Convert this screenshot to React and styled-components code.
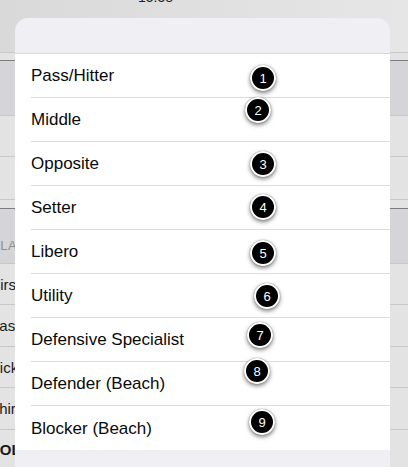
import React from "react";
import styled, { createGlobalStyle } from "styled-components";

const Global = createGlobalStyle`
  html, body { margin: 0; padding: 0; }
  body {
    width: 408px;
    height: 467px;
    overflow: hidden;
    font-family: "Liberation Sans", Arial, sans-serif;
    background: #e3e3e3;
  }
`;

const Page = styled.div`
  position: relative;
  width: 408px;
  height: 467px;
  overflow: hidden;
  background: #e3e3e3;
`;

const TopBar = styled.div`
  height: 52px;
  background: linear-gradient(90deg, #d9d9d9 0%, #e1e1e1 60%, #e6e6e6 100%);
  border-bottom: 1px solid #c9c9c9;
  overflow: hidden;
`;

const Clock = styled.div`
  margin-top: -10px;
  padding-left: 138px;
  font-size: 14px;
  line-height: 14px;
  color: #222;
`;

const BgRow = styled.div`
  height: ${(p) => p.$h}px;
  background: ${(p) => (p.$dark ? "#d5d5d9" : "#e3e3e3")};
  border-bottom: 1px solid ${(p) => (p.$line ? p.$line : "#c8c8c8")};
  box-sizing: border-box;
  display: flex;
  align-items: ${(p) => (p.$end ? "flex-end" : "center")};
  padding-bottom: ${(p) => (p.$end ? "10px" : "0")};
  overflow: hidden;
`;

const BgLabel = styled.span`
  margin-left: ${(p) => p.$shift}px;
  font-size: ${(p) => (p.$small ? 13 : 15)}px;
  color: ${(p) => (p.$small ? "#8e8e93" : "#1a1a1a")};
  font-weight: ${(p) => (p.$bold ? 700 : 400)};
  letter-spacing: ${(p) => (p.$small ? "0.5px" : "0")};
  white-space: nowrap;
`;

const Popover = styled.div`
  position: absolute;
  left: 15px;
  top: 18px;
  width: 375px;
  bottom: 0;
  background: #efeff4;
  border-radius: 13px 13px 0 0;
  display: flex;
  flex-direction: column;
`;

const Header = styled.div`
  height: 35px;
  flex: none;
  border-bottom: 1px solid #d8d8dc;
`;

const List = styled.div`
  background: #ffffff;
  display: flex;
  flex-direction: column;
`;

const Row = styled.div`
  position: relative;
  height: 44px;
  margin-left: 16px;
  box-sizing: border-box;
  border-bottom: ${(p) => (p.$last ? "none" : "1px solid #dcdcde")};
  display: flex;
  align-items: center;
  font-size: 17px;
  color: #0a0a0a;
  padding-top: 1px;
`;

const Badge = styled.div`
  position: absolute;
  width: 22px;
  height: 22px;
  border-radius: 50%;
  background: #000;
  border: 2px solid #fff;
  box-shadow: 0 2px 4px rgba(0, 0, 0, 0.5), 0 0 1px rgba(0, 0, 0, 0.6);
  color: #fff;
  font-family: "Liberation Sans", Arial, sans-serif;
  font-size: 13px;
  display: flex;
  align-items: center;
  justify-content: center;
`;

const items = [
  { label: "Pass/Hitter", x: 263, y: 78 },
  { label: "Middle", x: 258, y: 110 },
  { label: "Opposite", x: 263, y: 164 },
  { label: "Setter", x: 263, y: 207 },
  { label: "Libero", x: 263, y: 253 },
  { label: "Utility", x: 267, y: 296 },
  { label: "Defensive Specialist", x: 260, y: 335 },
  { label: "Defender (Beach)", x: 257, y: 371 },
  { label: "Blocker (Beach)", x: 262, y: 422 },
];

export default function App() {
  return (
    <Page>
      <Global />
      <TopBar>
        <Clock>15:58</Clock>
      </TopBar>
      <BgRow $h={8} $line="#7d7d7d" />
      <BgRow $h={55} $dark />
      <BgRow $h={41} />
      <BgRow $h={43} />
      <BgRow $h={9} $line="#7d7d7d" />
      <BgRow $h={55} $dark $end>
        <BgLabel $small $shift={-9}>PLAYERS</BgLabel>
      </BgRow>
      <BgRow $h={41}>
        <BgLabel $shift={-9}>First</BgLabel>
      </BgRow>
      <BgRow $h={42}>
        <BgLabel $shift={-9}>Last</BgLabel>
      </BgRow>
      <BgRow $h={41}>
        <BgLabel $shift={-11}>Nick</BgLabel>
      </BgRow>
      <BgRow $h={42}>
        <BgLabel $shift={-10}>Third</BgLabel>
      </BgRow>
      <BgRow $h={40}>
        <BgLabel $bold $shift={-11}>COLOR</BgLabel>
      </BgRow>

      <Popover>
        <Header />
        <List>
          {items.map((it, i) => (
            <Row key={it.label} $last={i === items.length - 1}>
              {it.label}
              <Badge
                style={{
                  left: it.x - 31 - 13,
                  top: it.y - (54 + 44 * i) - 13,
                }}
              >
                {i + 1}
              </Badge>
            </Row>
          ))}
        </List>
      </Popover>
    </Page>
  );
}
